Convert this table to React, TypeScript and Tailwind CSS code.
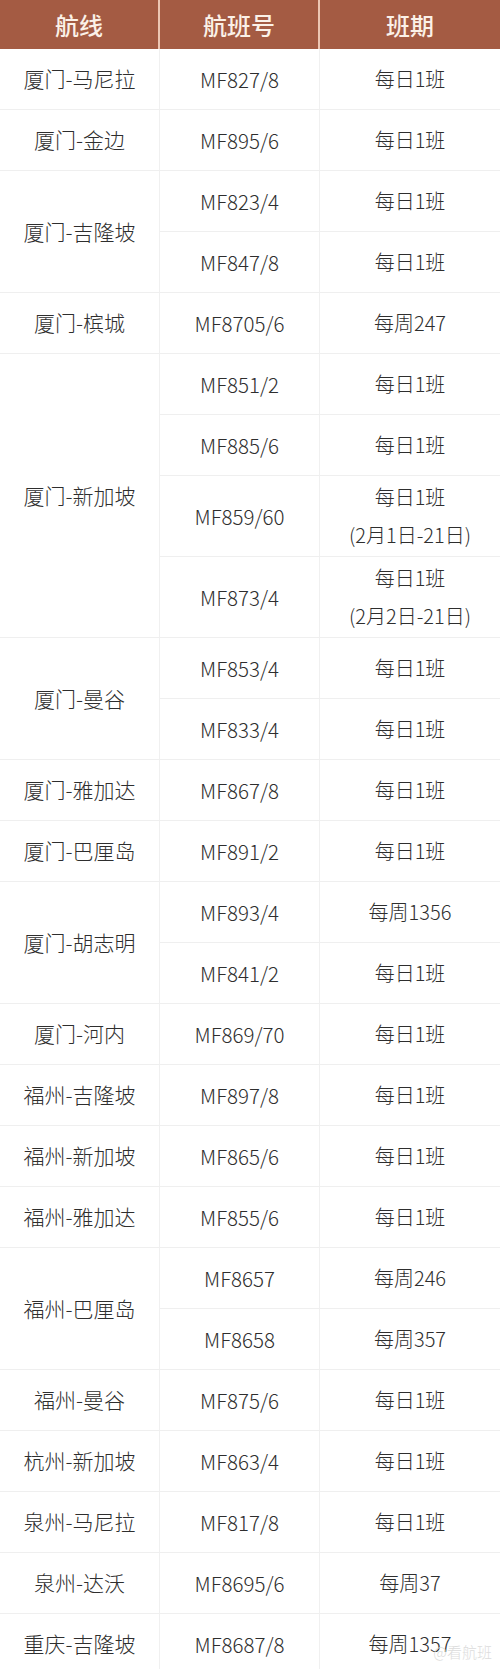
import React from "react";

type Flight = { no: string; sched: string[] };
type Group = { route: string; flights: Flight[] };

const daily = ["每日1班"];

const groups: Group[] = [
  { route: "厦门-马尼拉", flights: [{ no: "MF827/8", sched: daily }] },
  { route: "厦门-金边", flights: [{ no: "MF895/6", sched: daily }] },
  {
    route: "厦门-吉隆坡",
    flights: [
      { no: "MF823/4", sched: daily },
      { no: "MF847/8", sched: daily },
    ],
  },
  { route: "厦门-槟城", flights: [{ no: "MF8705/6", sched: ["每周247"] }] },
  {
    route: "厦门-新加坡",
    flights: [
      { no: "MF851/2", sched: daily },
      { no: "MF885/6", sched: daily },
      { no: "MF859/60", sched: ["每日1班", "(2月1日-21日)"] },
      { no: "MF873/4", sched: ["每日1班", "(2月2日-21日)"] },
    ],
  },
  {
    route: "厦门-曼谷",
    flights: [
      { no: "MF853/4", sched: daily },
      { no: "MF833/4", sched: daily },
    ],
  },
  { route: "厦门-雅加达", flights: [{ no: "MF867/8", sched: daily }] },
  { route: "厦门-巴厘岛", flights: [{ no: "MF891/2", sched: daily }] },
  {
    route: "厦门-胡志明",
    flights: [
      { no: "MF893/4", sched: ["每周1356"] },
      { no: "MF841/2", sched: daily },
    ],
  },
  { route: "厦门-河内", flights: [{ no: "MF869/70", sched: daily }] },
  { route: "福州-吉隆坡", flights: [{ no: "MF897/8", sched: daily }] },
  { route: "福州-新加坡", flights: [{ no: "MF865/6", sched: daily }] },
  { route: "福州-雅加达", flights: [{ no: "MF855/6", sched: daily }] },
  {
    route: "福州-巴厘岛",
    flights: [
      { no: "MF8657", sched: ["每周246"] },
      { no: "MF8658", sched: ["每周357"] },
    ],
  },
  { route: "福州-曼谷", flights: [{ no: "MF875/6", sched: daily }] },
  { route: "杭州-新加坡", flights: [{ no: "MF863/4", sched: daily }] },
  { route: "泉州-马尼拉", flights: [{ no: "MF817/8", sched: daily }] },
  { route: "泉州-达沃", flights: [{ no: "MF8695/6", sched: ["每周37"] }] },
  { route: "重庆-吉隆坡", flights: [{ no: "MF8687/8", sched: ["每周1357"] }] },
];

function FlightRow({ flight }: { flight: Flight }) {
  const tall = flight.sched.length > 1;
  return (
    <div
      className={
        tall
          ? "flex h-[81px] border-b border-[#efefef] last:h-[80px] last:border-b-0"
          : "flex h-[61px] border-b border-[#efefef] last:h-[60px] last:border-b-0"
      }
    >
      <div className="flex w-[160px] shrink-0 items-center justify-center border-r border-[#f0f0f0] text-[20.5px]">
        {flight.no}
      </div>
      <div className="flex flex-1 flex-col items-center justify-center leading-[38px]">
        {flight.sched.map((s) => (
          <span key={s}>{s}</span>
        ))}
      </div>
    </div>
  );
}

export default function App() {
  return (
    <div
      className="relative h-[1669px] w-[500px] overflow-hidden bg-white text-[20px] font-light text-[#2e2e2e]"
      style={{ fontFamily: '"Noto Sans CJK SC", "Noto Sans", sans-serif' }}
    >
      <div className="flex h-[49px] bg-[#a45b43] text-[24px] font-medium text-[#fbf1e8]">
        <div className="flex w-[160px] items-center justify-center border-r-2 border-[#ecc6b3]">
          航线
        </div>
        <div className="flex w-[160px] items-center justify-center border-r-2 border-[#ecc6b3]">
          航班号
        </div>
        <div className="flex flex-1 items-center justify-center">班期</div>
      </div>
      {groups.map((g) => (
        <div key={g.route} className="flex border-b border-[#efefef]">
          <div className="flex w-[160px] shrink-0 items-center justify-center border-r border-[#f0f0f0] text-[21px]">
            {g.route}
          </div>
          <div className="flex flex-1 flex-col">
            {g.flights.map((f) => (
              <FlightRow key={f.no} flight={f} />
            ))}
          </div>
        </div>
      ))}
      <div className="absolute bottom-[6px] right-[8px] text-[15px] text-[#dcdcdc]">
        @看航班
      </div>
    </div>
  );
}
